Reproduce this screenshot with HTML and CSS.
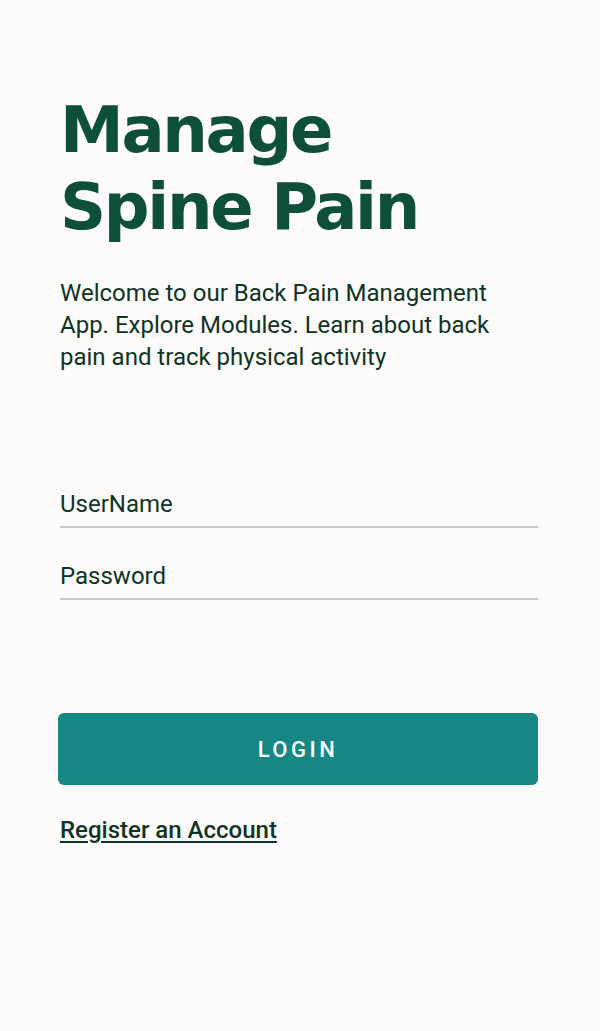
FILE: index.html
```html
<!DOCTYPE html>
<html>
<head>
<meta charset="utf-8">
<link rel="stylesheet" href="styles.css">
</head>
<body>
<main class="screen">
  <h1 class="title">Manage<br>Spine Pain</h1>
  <p class="intro">Welcome to our Back Pain Management App. Explore Modules. Learn about back pain and track physical activity</p>
  <form class="form">
    <div class="field"><span class="placeholder">UserName</span></div>
    <div class="field"><span class="placeholder">Password</span></div>
    <button type="button" class="login">LOGIN</button>
    <a class="register" href="#">Register an Account</a>
  </form>
</main>
</body>
</html>
```
FILE: styles.css
```css
html, body {
  margin: 0;
  padding: 0;
  background: #fcfbfa;
}
.screen {
  width: 600px;
  height: 1031px;
  box-sizing: border-box;
  padding: 92px 62px 0 60px;
  font-family: Roboto, "Liberation Sans", sans-serif;
  color: #0f3324;
}
.title {
  margin: 0;
  font-family: "DejaVu Sans", sans-serif;
  font-weight: bold;
  font-size: 64px;
  line-height: 77px;
  color: #0d4f37;
  letter-spacing: -2.3px;
}
.intro {
  margin: 31px 0 0;
  font-size: 24px;
  line-height: 32px;
}
.form {
  display: flex;
  flex-direction: column;
  margin-top: 109px;
}
.field {
  height: 46px;
  border-bottom: 2px solid #c8c8c8;
  display: flex;
  align-items: flex-end;
  padding-bottom: 8px;
  box-sizing: border-box;
  font-size: 24px;
  margin-bottom: 26px;
}
.login {
  margin: 87px 0 0 -2px;
  height: 72px;
  border: none;
  border-radius: 6px;
  background: #178786;
  color: #fff;
  font-family: Roboto, sans-serif;
  font-weight: 500;
  font-size: 22px;
  letter-spacing: 3.5px;
}
.register {
  margin-top: 31px;
  align-self: flex-start;
  font-size: 24px;
  font-weight: 500;
  color: #0f3324;
  text-decoration: underline;
  text-underline-offset: 3px;
}
```
